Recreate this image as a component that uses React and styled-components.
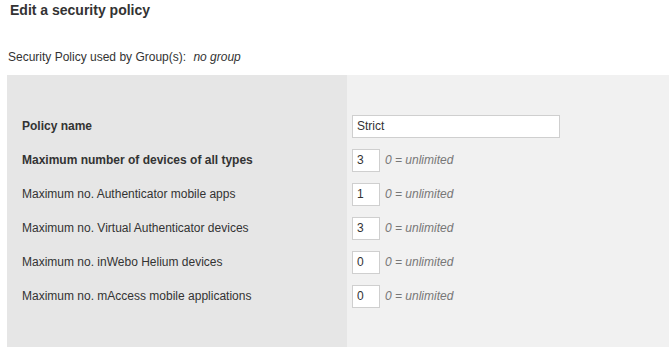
import React from 'react'
import styled, { createGlobalStyle } from 'styled-components'

const GlobalStyle = createGlobalStyle`
  body {
    margin: 0;
    background: #fff;
    font-family: "Liberation Sans", Arial, sans-serif;
    color: #333;
  }
`

const Page = styled.div`
  width: 669px;
  height: 353px;
  overflow: hidden;
`

const Title = styled.h1`
  margin: 0;
  padding: 0 10px;
  font-size: 14px;
  font-weight: bold;
  line-height: 20px;
  color: #333;
`

const UsedBy = styled.p`
  margin: 29px 0 0;
  padding: 0 8px;
  font-size: 12px;
  line-height: 16px;
  color: #333;

  em {
    margin-left: 4px;
  }
`

const Panel = styled.div`
  margin: 10px 0 0 7px;
  padding: 34px 0 34px;
  display: grid;
  grid-template-columns: 340px 1fr;
  grid-auto-rows: 34px;
  background: linear-gradient(to right, #e6e6e6 340px, #f1f1f1 340px);
`

const Label = styled.div`
  display: flex;
  align-items: center;
  padding-left: 15px;
  font-size: 12px;
  font-weight: ${p => (p.$bold ? 'bold' : 'normal')};
  color: #333;
`

const Field = styled.div`
  display: flex;
  align-items: center;
  gap: 5px;
  padding-left: 5px;
`

const Input = styled.input`
  box-sizing: border-box;
  width: ${p => p.$width}px;
  height: 23px;
  padding: 0 4px;
  border: 1px solid #cfcfcf;
  background: #fff;
  font-family: "Liberation Sans", Arial, sans-serif;
  font-size: 12px;
  color: #333;
  outline: none;
`

const Hint = styled.span`
  font-size: 12px;
  font-style: italic;
  color: #777;
`

const limits = [
  { label: 'Maximum number of devices of all types', value: '3', bold: true },
  { label: 'Maximum no. Authenticator mobile apps', value: '1' },
  { label: 'Maximum no. Virtual Authenticator devices', value: '3' },
  { label: 'Maximum no. inWebo Helium devices', value: '0' },
  { label: 'Maximum no. mAccess mobile applications', value: '0' },
]

const App = () => {
  return (
    <Page>
      <GlobalStyle />
      <Title>Edit a security policy</Title>
      <UsedBy>
        Security Policy used by Group(s): <em>no group</em>
      </UsedBy>
      <Panel>
        <Label $bold>Policy name</Label>
        <Field>
          <Input $width={208} defaultValue="Strict" />
        </Field>
        {limits.map(l => (
          <React.Fragment key={l.label}>
            <Label $bold={l.bold}>{l.label}</Label>
            <Field>
              <Input $width={28} defaultValue={l.value} />
              <Hint>0 = unlimited</Hint>
            </Field>
          </React.Fragment>
        ))}
      </Panel>
    </Page>
  )
}

export default App
